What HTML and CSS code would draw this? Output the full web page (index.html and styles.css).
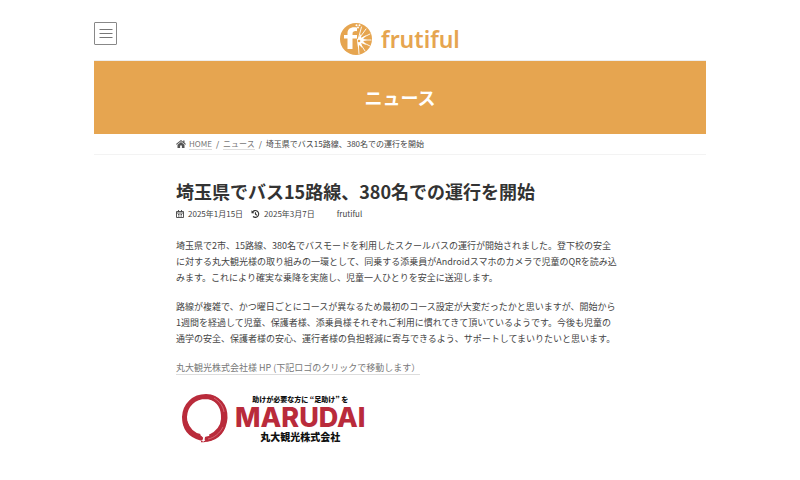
FILE: index.html
```html
<!DOCTYPE html>
<html lang="ja">
<head>
<meta charset="utf-8">
<meta name="viewport" content="width=device-width, initial-scale=1">
<title>埼玉県でバス15路線、380名での運行を開始 | frutiful</title>
<link rel="stylesheet" href="styles.css">
</head>
<body>
<div class="page">
  <header class="site-header">
    <button class="menu-button" type="button" aria-label="メニュー">
      <svg width="14" height="12" viewBox="0 0 14 12" aria-hidden="true"><path d="M.5 1.500h13M.5 5.500h13M.5 9.500h13" stroke="#777" stroke-width="1"/></svg>
    </button>
    <a class="brand" href="#">
      <svg class="brand-mark" viewBox="0 0 32 32" aria-hidden="true">
        <circle cx="16" cy="16" r="16" fill="#e6a550"/>
        <g stroke="#fff" stroke-width=".9" stroke-linecap="round">
          <path d="M18 17 21.500 4M18 17 26 6M18 17 30 11M18 17 31 17M18 17 30 23M18 17 25 28M18 17 19 31"/>
        </g>
        <path d="m17 17 4-6 .2 4 5-3-3 4 4 1-4 1 3 4-5-2 1 5-3-3-1 4z" fill="#fff"/>
        <path d="M17 4.500c-6-1-9.500 1-9.500 6V12H4v3.500h3.500V26h5V15.500H17V12h-4.500v-1c0-2.500 1.500-3.200 4.500-2.800z" fill="#fff"/>
        <g fill="#fff"><circle cx="16.500" cy="2.300" r="1"/><circle cx="19.500" cy="2.300" r="1"/><circle cx="18" cy="4.500" r="1"/></g>
        <circle cx="19" cy="18" r="1.300" fill="#e6a550"/>
      </svg>
      <span class="brand-name">frutiful</span>
    </a>
  </header>

  <div class="banner">ニュース</div>

  <nav class="breadcrumb" aria-label="パンくずリスト">
    <ol class="column crumbs">
      <li><svg width="10" height="8" viewBox="0 0 10 8" aria-hidden="true"><path d="M5 0 0 4l.6.7L5 1.200l4.400 3.500.6-.7-1.500-1.200V.6H7.200v1.100zM5 2 1.500 4.800V8h2.600V5.500h1.800V8h2.600V4.800z" fill="#555"/></svg><a href="#">HOME</a></li>
      <li><a href="#">ニュース</a></li>
      <li>埼玉県でバス15路線、380名での運行を開始</li>
    </ol>
  </nav>

  <main class="column article">
    <h1>埼玉県でバス15路線、380名での運行を開始</h1>
    <div class="meta">
      <svg width="8" height="8" viewBox="0 0 8 8" aria-hidden="true"><path d="M.5 1.500h7v6h-7zM.5 3h7M2.500 0v2M5.500 0v2M2 4.500h1M3.500 4.500h1M5 4.500h1M2 6h1M3.500 6h1M5 6h1" fill="none" stroke="#444" stroke-width=".9"/></svg>
      <time datetime="2025-01-15">2025年1月15日</time>
      <svg class="updated" width="9" height="8" viewBox="0 0 8 8" aria-hidden="true"><path d="M1 2A3.400 3.400 0 1 1 1.500 6.500M4 2.200V4.200l1.400 1" fill="none" stroke="#333" stroke-width="1.100"/><path d="M0 .3v2.900h2.900z" fill="#333"/></svg>
      <time datetime="2025-03-07">2025年3月7日</time>
      <span class="author">frutiful</span>
    </div>
    <p>埼玉県で2市、15路線、380名でバスモードを利用したスクールバスの運行が開始されました。登下校の安全<br>に対する丸大観光様の取り組みの一環として、同乗する添乗員がAndroidスマホのカメラで児童のQRを読み込<br>みます。これにより確実な乗降を実施し、児童一人ひとりを安全に送迎します。</p>
    <p>路線が複雑で、かつ曜日ごとにコースが異なるため最初のコース設定が大変だったかと思いますが、開始から<br>1週間を経過して児童、保護者様、添乗員様それぞれご利用に慣れてきて頂いているようです。今後も児童の<br>通学の安全、保護者様の安心、運行者様の負担軽減に寄与できるよう、サポートしてまいりたいと思います。</p>
    <p><a href="#">丸大観光株式会社様 HP (下記ロゴのクリックで移動します）</a></p>
    <a class="client-logo" href="#" aria-label="丸大観光株式会社">
      <svg class="ring" viewBox="0 0 48 50" aria-hidden="true">
        <path d="M20 45C9 42 3.500 35 3.500 24 4 12 13 3.500 25 3.500 37 4 44.500 13 44 25 43.500 36 36 44 26 46" fill="none" stroke="#b92b3b" stroke-width="5" stroke-linecap="round"/>
        <path d="M4 29C7 38 12 42 19 43.500M29 4c9 3 14 10 13.500 22C42 34 37 40 29 44" fill="none" stroke="#b92b3b" stroke-width="5"/>
        <path d="M20 48.500c10 1 20-4 24-15" fill="none" stroke="#b92b3b" stroke-width="1.300"/>
        <path d="M33 5c6 4 9 8 10 14M27 46c6-1 12-6 15-12" fill="none" stroke="#e58b95" stroke-width=".6"/>
        <path d="m20 41.500 3 3-1 4" fill="none" stroke="#fff" stroke-width="1.500"/>
      </svg>
      <span class="client-text">
        <span class="client-small">助けが必要な方に “足助け” を</span>
        <span class="client-name">MARUDAI</span>
        <span class="client-company">丸大観光株式会社</span>
      </span>
    </a>
  </main>
</div>
</body>
</html>
```
FILE: styles.css
```css
* { box-sizing: border-box; }

body {
  margin: 0;
  background: #fff;
  color: #444;
  font: 9px/16px "Noto Sans CJK JP", sans-serif;
}

.page {
  max-width: 612px;
  margin: 0 auto;
}

.column {
  width: 100%;
  max-width: 448px;
  margin: 0 auto;
}

.site-header {
  display: grid;
  grid-template-columns: 1fr auto 1fr;
  align-items: start;
  padding: 22px 0 4px;
}

.menu-button {
  display: grid;
  place-items: center;
  width: 23px;
  height: 23px;
  padding: 0;
  border: 1px solid #888;
  border-radius: 1px;
  background: #fff;
}

.brand {
  display: flex;
  align-items: center;
  gap: 9px;
  color: #e6a550;
  text-decoration: none;
}

.brand-mark {
  width: 32px;
  height: 34px;
}

.brand-name {
  font: 600 23px/32px "Noto Sans", sans-serif;
}

.banner {
  border-top: 1px solid #eee;
  background: #e6a550;
  color: #fff;
  font-size: 18px;
  font-weight: 700;
  line-height: 73px;
  text-align: center;
}

.breadcrumb {
  border-bottom: 1px solid #f3f3f3;
  font-size: 8px;
  line-height: 20px;
}

.crumbs {
  display: flex;
  padding: 0;
  list-style: none;
}

.crumbs li {
  display: flex;
  align-items: center;
}

.crumbs li + li::before {
  content: "/";
  margin: 0 4px;
}

.crumbs svg { margin-right: 3px; }

a { color: #777; }

.crumbs a,
.article p a {
  text-decoration: none;
  border-bottom: 1px solid #ddd;
  line-height: 10px;
}

.article { padding-top: 23px; }

h1 {
  margin: 0;
  color: #333;
  font-size: 18px;
  line-height: 27px;
}

.meta {
  display: flex;
  align-items: center;
  gap: 4px;
  margin-bottom: 15px;
  font-size: 8px;
  line-height: 18px;
}

.meta .updated { margin-left: 4px; }
.meta .author { margin-left: 18px; }

.article p {
  margin: 0 0 13px;
  white-space: nowrap;
}

.client-logo {
  display: flex;
  align-items: center;
  gap: 6px;
  width: max-content;
  padding: 4px 5px;
  color: #111;
  text-decoration: none;
}

.ring {
  width: 48px;
  height: 50px;
}

.client-text {
  display: grid;
  justify-items: center;
  font-weight: 900;
}

.client-small {
  font-size: 7px;
  line-height: 10px;
}

.client-name {
  color: #b92b3b;
  font: 800 27px/27px Inter, sans-serif;
}

.client-company {
  font-size: 10px;
  line-height: 12px;
}
```
